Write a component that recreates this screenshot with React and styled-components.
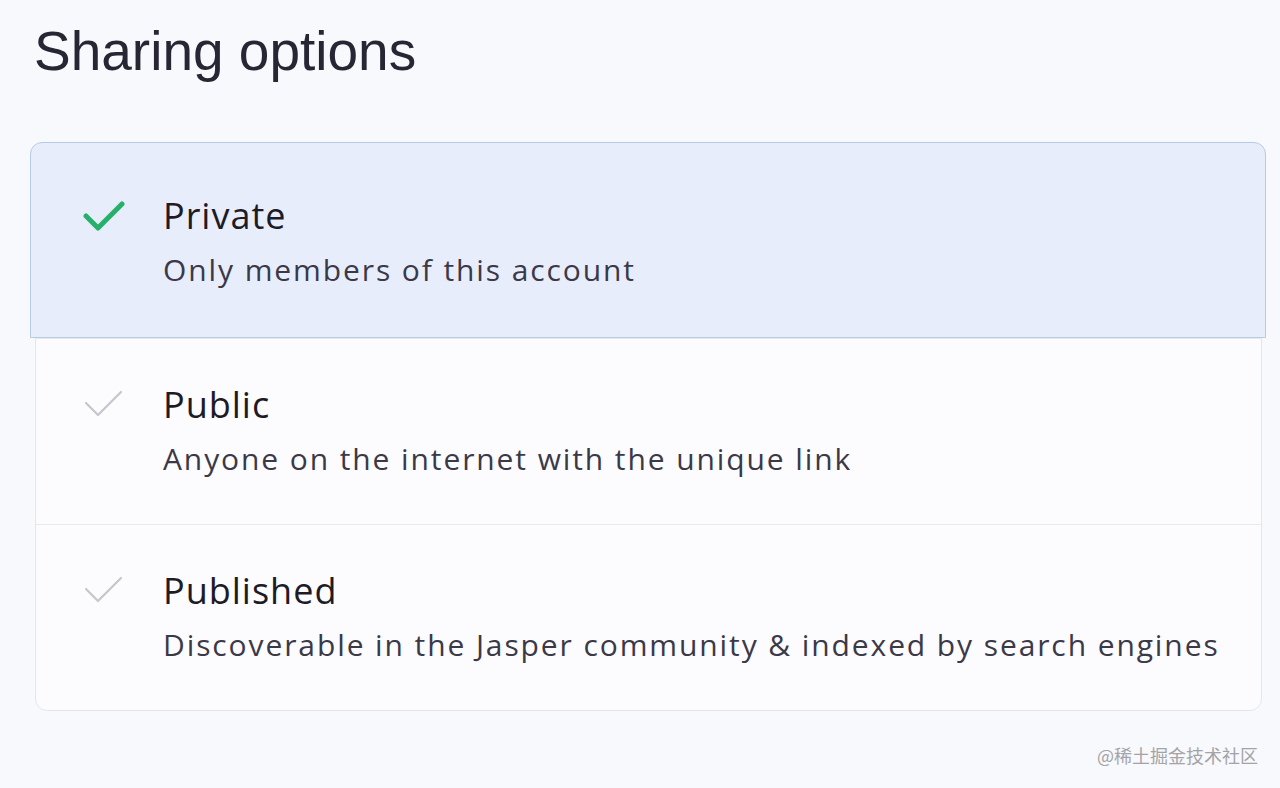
import React from 'react';
import styled, { createGlobalStyle } from 'styled-components';

const GlobalStyle = createGlobalStyle`
  html, body {
    margin: 0;
    padding: 0;
    background: #f8f9fc;
  }
  body {
    font-family: "Open Sans", "Liberation Sans", sans-serif;
    color: #1f1d2b;
  }
`;

const Page = styled.div`
  position: relative;
  width: 1280px;
  height: 788px;
  box-sizing: border-box;
  padding: 17px 16px 0 35px;
  background: #f8f9fc;
  overflow: hidden;
`;

const Title = styled.h1`
  margin: 0 0 57px -1px;
  font-family: "Liberation Sans", Arial, sans-serif;
  font-size: 55px;
  font-weight: 400;
  line-height: 68px;
  color: #272634;
`;

const Card = styled.div`
  width: 1225px;
  background: #fcfcfe;
  border: 1px solid #e4e6ed;
  border-radius: 12px;
  display: flex;
  flex-direction: column;
`;

const Option = styled.div`
  display: flex;
  align-items: flex-start;
  gap: 38px;
  box-sizing: border-box;
  height: ${p => (p.$selected ? '196px' : '186px')};
  padding: ${p => (p.$selected ? '52px 0 0 52px' : '45px 0 0 47px')};
  margin: ${p => (p.$selected ? '-1px -5px 0 -6px' : '0')};
  background: ${p => (p.$selected ? '#e8edfc' : 'transparent')};
  border: ${p => (p.$selected ? '1px solid #b6cce6' : 'none')};
  border-radius: ${p => (p.$selected ? '12px 12px 0 0' : '0')};
  & + & {
    border-top: 1px solid #e8e9ef;
  }
`;

const CheckBox = styled.div`
  width: 42px;
  height: 34px;
  flex-shrink: 0;
  margin-top: ${p => (p.$selected ? '4px' : '1px')};
`;

const Texts = styled.div`
  display: flex;
  flex-direction: column;
`;

const OptionTitle = styled.div`
  font-size: 36px;
  line-height: 42px;
  font-weight: 500;
  letter-spacing: 1px;
  color: #1c1b26;
`;

const OptionDesc = styled.div`
  margin-top: 13px;
  font-size: 30px;
  line-height: 40px;
  font-weight: 400;
  letter-spacing: 1.9px;
  color: #3b3948;
`;

const Watermark = styled.div`
  position: absolute;
  right: 22px;
  bottom: 20px;
  font-family: "Noto Sans CJK SC", sans-serif;
  font-size: 18px;
  color: #a3a3a8;
`;

const Check = ({ active }) => (
  <svg width="42" height="34" viewBox="0 0 42 34">
    {active ? (
      <path d="M3 17 L15 29 L39 5" fill="none" stroke="#27b069" strokeWidth="5" strokeLinecap="round" strokeLinejoin="round" />
    ) : (
      <path d="M3 18 L15 30 L38 7" fill="none" stroke="#c5c7cd" strokeWidth="2.2" strokeLinecap="round" strokeLinejoin="round" />
    )}
  </svg>
);

const options = [
  { title: 'Private', desc: 'Only members of this account' },
  { title: 'Public', desc: 'Anyone on the internet with the unique link' },
  { title: 'Published', desc: 'Discoverable in the Jasper community & indexed by search engines' },
];

const App = () => {
  const selected = 0;
  return (
    <Page>
      <GlobalStyle />
      <Title>Sharing options</Title>
      <Card>
        {options.map((o, i) => (
          <Option key={o.title} $selected={i === selected}>
            <CheckBox $selected={i === selected}>
              <Check active={i === selected} />
            </CheckBox>
            <Texts>
              <OptionTitle>{o.title}</OptionTitle>
              <OptionDesc>{o.desc}</OptionDesc>
            </Texts>
          </Option>
        ))}
      </Card>
      <Watermark>@稀土掘金技术社区</Watermark>
    </Page>
  );
};

export default App;
